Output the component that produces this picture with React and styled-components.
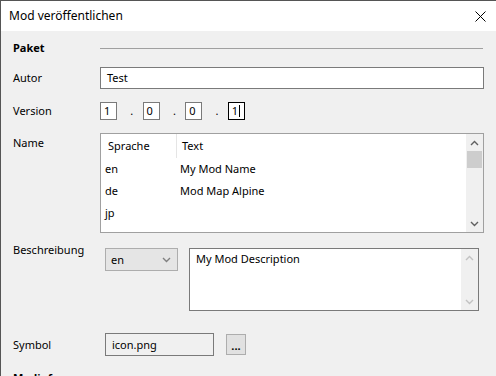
import React from 'react';
import styled, { createGlobalStyle } from 'styled-components';

const GlobalStyle = createGlobalStyle`
    html, body {
        margin: 0;
        padding: 0;
        background: #f0f0f0;
    }
    body {
        font-family: "Noto Sans", "Liberation Sans", sans-serif;
        font-size: 11px;
        line-height: 16px;
        color: #000;
    }
`;

const Window = styled.div`
    width: 496px;
    height: 376px;
    box-sizing: border-box;
    border-top: 1px solid #555;
    border-left: 1px solid #555;
    overflow: hidden;
    display: flex;
    flex-direction: column;
    background: #f0f0f0;
`;

const TitleBar = styled.div`
    height: 30px;
    flex: none;
    background: #fff;
    display: flex;
    align-items: center;
    justify-content: space-between;
    padding: 0 10px 0 8px;
    font-size: 12px;
`;

const Body = styled.div`
    padding: 0 12px;
    display: flex;
    flex-direction: column;
`;

const Row = styled.div`
    display: grid;
    grid-template-columns: 87px 1fr;
    align-items: ${p => p.$align || 'center'};
    margin-top: ${p => p.$top}px;
`;

const Label = styled.div`
    padding-top: ${p => p.$pad || 0}px;
`;

const SectionTitle = styled.div`
    font-weight: bold;
`;

const Rule = styled.div`
    height: 1px;
    background: #a0a0a0;
    margin-right: 1px;
`;

const TextInput = styled.div`
    height: 22px;
    box-sizing: border-box;
    border: 1px solid #7a7a7a;
    background: #fff;
    padding: 0 6px;
    display: flex;
    align-items: center;
`;

const VersionGroup = styled.div`
    display: flex;
    align-items: center;
`;

const VersionBox = styled.div`
    width: 17px;
    height: 18px;
    box-sizing: border-box;
    border: 1px solid ${p => (p.$focus ? '#000' : '#7a7a7a')};
    background: #fff;
    padding-left: 3px;
    display: flex;
    align-items: center;
`;

const Caret = styled.span`
    display: inline-block;
    width: 1px;
    height: 12px;
    background: #000;
    margin-left: 1px;
`;

const Dot = styled.span`
    width: 25.6px;
    box-sizing: border-box;
    padding-left: 4px;
    text-align: center;
`;

const ListView = styled.div`
    height: 100px;
    box-sizing: border-box;
    border: 1px solid #a0a0a0;
    background: #fff;
    display: flex;
`;

const Table = styled.div`
    flex: 1;
    display: flex;
    flex-direction: column;
`;

const HeaderRow = styled.div`
    height: 24px;
    display: flex;
    align-items: stretch;
`;

const HeaderCell = styled.div`
    width: ${p => p.$w ? `${p.$w}px` : 'auto'};
    flex: ${p => p.$w ? 'none' : 1};
    padding-left: ${p => p.$pad}px;
    box-sizing: border-box;
    display: flex;
    align-items: center;
    border-right: ${p => p.$divider ? '1px solid #e5e5e5' : 'none'};
`;

const DataRow = styled.div`
    height: 22px;
    display: flex;
    align-items: center;
`;

const Cell = styled.div`
    width: ${p => p.$w ? `${p.$w}px` : 'auto'};
    flex: ${p => p.$w ? 'none' : 1};
    padding-left: ${p => p.$pad}px;
    box-sizing: border-box;
`;

const ScrollBar = styled.div`
    width: 17px;
    flex: none;
    background: #f0f0f0;
    display: flex;
    flex-direction: column;
    align-items: center;
`;

const ArrowButton = styled.div`
    width: 17px;
    height: 17px;
    flex: none;
    display: flex;
    align-items: center;
    justify-content: center;
`;

const Thumb = styled.div`
    width: 15px;
    height: 17px;
    background: #cdcdcd;
    flex: none;
`;

const Track = styled.div`
    flex: 1;
`;

const DescGroup = styled.div`
    display: flex;
    align-items: flex-start;
    margin-top: 6px;
    padding-left: 5px;
    padding-right: 5px;
`;

const Combo = styled.div`
    width: 73px;
    height: 23px;
    box-sizing: border-box;
    border: 1px solid #adadad;
    background: #e5e5e5;
    display: flex;
    align-items: center;
    justify-content: space-between;
    padding: 0 6px 0 5px;
`;

const TextArea = styled.div`
    flex: 1;
    margin-left: 11px;
    height: 63px;
    box-sizing: border-box;
    border: 1px solid #7a7a7a;
    background: #fff;
    display: flex;
`;

const TextAreaContent = styled.div`
    flex: 1;
    padding: 2px 6px;
`;

const FileGroup = styled.div`
    display: flex;
    align-items: center;
    padding-left: 5px;
`;

const ReadOnlyField = styled.div`
    width: 109px;
    height: 23px;
    box-sizing: border-box;
    border: 1px solid #7a7a7a;
    background: #f0f0f0;
    padding-left: 6px;
    display: flex;
    align-items: center;
`;

const BrowseButton = styled.div`
    width: 20px;
    height: 21px;
    margin-left: 12px;
    box-sizing: border-box;
    border: 1px solid #adadad;
    background: #e1e1e1;
    display: flex;
    align-items: center;
    justify-content: center;
    font-weight: bold;
    padding-top: 3px;
`;

function Chevron({ up, color = '#606060' }) {
    return (
        <svg width="9" height="6" viewBox="0 0 9 6">
            <path
                d={up ? 'M1 5 L4.5 1.5 L8 5' : 'M1 1 L4.5 4.5 L8 1'}
                fill="none"
                stroke={color}
                strokeWidth="1.4"
            />
        </svg>
    );
}

function CloseIcon() {
    return (
        <svg width="11" height="11" viewBox="0 0 11 11">
            <path d="M0.5 0.5 L10.5 10.5 M10.5 0.5 L0.5 10.5" stroke="#000" strokeWidth="1" />
        </svg>
    );
}

const versionParts = ['1', '0', '0', '1'];

const names = [
    { lang: 'en', text: 'My Mod Name' },
    { lang: 'de', text: 'Mod Map Alpine' },
    { lang: 'jp', text: '' },
];

export default function App() {
    return (
        <>
            <GlobalStyle />
            <Window>
                <TitleBar>
                    <span>Mod veröffentlichen</span>
                    <CloseIcon />
                </TitleBar>
                <Body>
                    <Row $top={9}>
                        <SectionTitle>Paket</SectionTitle>
                        <Rule />
                    </Row>
                    <Row $top={11}>
                        <Label>Autor</Label>
                        <TextInput>Test</TextInput>
                    </Row>
                    <Row $top={13}>
                        <Label>Version</Label>
                        <VersionGroup>
                            {versionParts.map((v, i) => (
                                <React.Fragment key={i}>
                                    {i > 0 && <Dot>.</Dot>}
                                    <VersionBox $focus={i === 3}>
                                        {v}
                                        {i === 3 && <Caret />}
                                    </VersionBox>
                                </React.Fragment>
                            ))}
                        </VersionGroup>
                    </Row>
                    <Row $top={13} $align="start">
                        <Label $pad={2}>Name</Label>
                        <ListView>
                            <Table>
                                <HeaderRow>
                                    <HeaderCell $w={76} $pad={7} $divider>Sprache</HeaderCell>
                                    <HeaderCell $pad={5}>Text</HeaderCell>
                                </HeaderRow>
                                {names.map(n => (
                                    <DataRow key={n.lang}>
                                        <Cell $w={76} $pad={4}>{n.lang}</Cell>
                                        <Cell $pad={3}>{n.text}</Cell>
                                    </DataRow>
                                ))}
                            </Table>
                            <ScrollBar>
                                <ArrowButton><Chevron up /></ArrowButton>
                                <Thumb />
                                <Track />
                                <ArrowButton><Chevron /></ArrowButton>
                            </ScrollBar>
                        </ListView>
                    </Row>
                    <Row $top={9} $align="start">
                        <Label>Beschreibung</Label>
                        <DescGroup>
                            <Combo>
                                <span>en</span>
                                <Chevron color="#808080" />
                            </Combo>
                            <TextArea>
                                <TextAreaContent>My Mod Description</TextAreaContent>
                                <ScrollBar>
                                    <ArrowButton><Chevron up color="#c2c2c2" /></ArrowButton>
                                    <Track />
                                    <ArrowButton><Chevron color="#c2c2c2" /></ArrowButton>
                                </ScrollBar>
                            </TextArea>
                        </DescGroup>
                    </Row>
                    <Row $top={22}>
                        <Label>Symbol</Label>
                        <FileGroup>
                            <ReadOnlyField>icon.png</ReadOnlyField>
                            <BrowseButton>...</BrowseButton>
                        </FileGroup>
                    </Row>
                    <Row $top={14}>
                        <SectionTitle>Modinfo</SectionTitle>
                    </Row>
                </Body>
            </Window>
        </>
    );
}
